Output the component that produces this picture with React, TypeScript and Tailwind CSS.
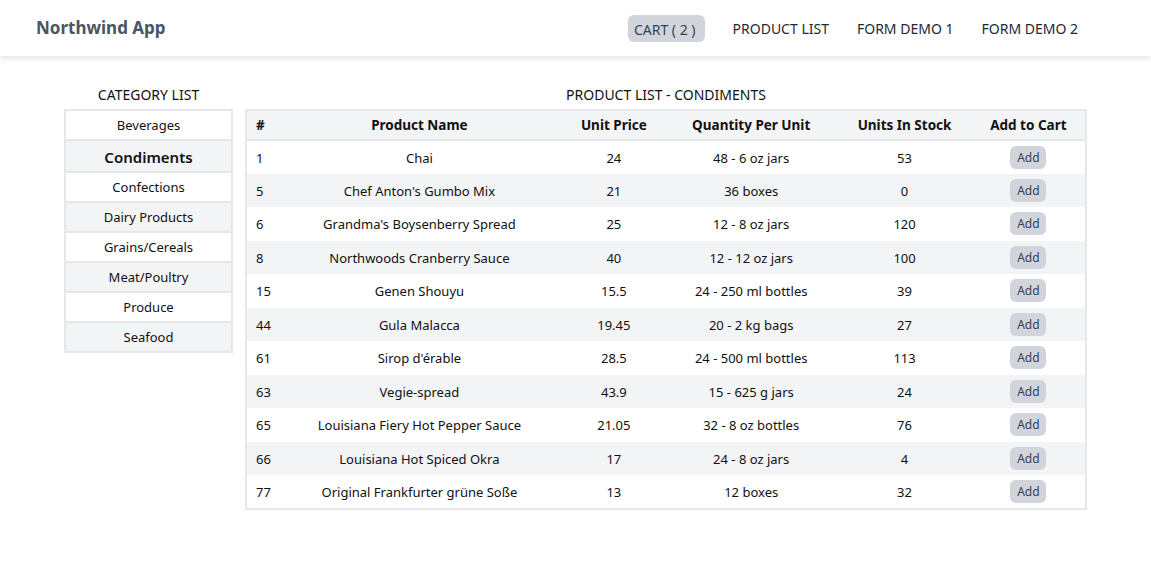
import React from "react";

const categories = [
  "Beverages",
  "Condiments",
  "Confections",
  "Dairy Products",
  "Grains/Cereals",
  "Meat/Poultry",
  "Produce",
  "Seafood",
];

const products: [string, string, string, string, string][] = [
  ["1", "Chai", "24", "48 - 6 oz jars", "53"],
  ["5", "Chef Anton's Gumbo Mix", "21", "36 boxes", "0"],
  ["6", "Grandma's Boysenberry Spread", "25", "12 - 8 oz jars", "120"],
  ["8", "Northwoods Cranberry Sauce", "40", "12 - 12 oz jars", "100"],
  ["15", "Genen Shouyu", "15.5", "24 - 250 ml bottles", "39"],
  ["44", "Gula Malacca", "19.45", "20 - 2 kg bags", "27"],
  ["61", "Sirop d'érable", "28.5", "24 - 500 ml bottles", "113"],
  ["63", "Vegie-spread", "43.9", "15 - 625 g jars", "24"],
  ["65", "Louisiana Fiery Hot Pepper Sauce", "21.05", "32 - 8 oz bottles", "76"],
  ["66", "Louisiana Hot Spiced Okra", "17", "24 - 8 oz jars", "4"],
  ["77", "Original Frankfurter grüne Soße", "13", "12 boxes", "32"],
];

export default function App() {
  return (
    <div
      className="min-h-[583px] bg-white text-[#111] text-[13px]"
      style={{ fontFamily: '"Noto Sans", sans-serif' }}
    >
      <header className="h-14 flex items-center justify-between pl-9 pr-[59px] shadow-[0_2px_6px_rgba(0,0,0,0.12)]">
        <div className="text-[17px] font-bold text-[#4b5563]">Northwind App</div>
        <nav className="flex items-center text-[14px] text-[#1f2937] pt-[1px]">
          <span className="bg-[#d1d5db] rounded-md pl-[6px] pr-[9px] h-[27px] flex items-center text-[#374151] mr-[14px] pt-[1px]">
            CART ( 2 )
          </span>
          <span className="px-[14px]">PRODUCT LIST</span>
          <span className="px-[14px]">FORM DEMO 1</span>
          <span className="px-[14px]">FORM DEMO 2</span>
        </nav>
      </header>

      <main className="flex gap-3 px-16 pt-[29px]">
        <div className="w-[169px] shrink-0">
          <div className="text-center text-[14px] h-5 leading-5 mb-[4px]">CATEGORY LIST</div>
          <div className="border-2 border-[#e5e7eb]">
            {categories.map((c, i) => (
              <div
                key={c}
                className={
                  "flex items-center justify-center pt-[2px] border-[#e5e7eb] " +
                  (i > 0 ? "border-t-2 " : "") +
                  (i % 2 === 1 ? "bg-[#f3f4f6] " : "bg-white ") +
                  (c === "Condiments"
                    ? "h-[32px] text-[15px] font-semibold"
                    : i === 0
                    ? "h-[28px]"
                    : "h-[30px]")
                }
              >
                {c}
              </div>
            ))}
          </div>
        </div>

        <div className="flex-1">
          <div className="text-center text-[14px] h-5 leading-5 mb-[4px]">PRODUCT LIST - CONDIMENTS</div>
          <table className="w-[842px] table-fixed border-2 border-[#e5e7eb] border-collapse">
            <colgroup>
              <col className="w-[30px]" />
              <col className="w-[286px]" />
              <col className="w-[102px]" />
              <col className="w-[172px]" />
              <col className="w-[134px]" />
              <col className="w-[114px]" />
            </colgroup>
            <thead>
              <tr className="bg-[#f3f4f6] h-[30px] border-b-2 border-[#e5e7eb] font-bold text-[13.5px]">
                <th className="text-left pl-[9px]">#</th>
                <th>Product Name</th>
                <th>Unit Price</th>
                <th>Quantity Per Unit</th>
                <th>Units In Stock</th>
                <th>Add to Cart</th>
              </tr>
            </thead>
            <tbody>
              {products.map((p, i) => (
                <tr
                  key={p[0]}
                  className={"h-[33.5px] " + (i % 2 === 1 ? "bg-[#f3f4f6]" : "bg-white")}
                >
                  <td className="text-left pl-[9px] pt-[2px] whitespace-nowrap">{p[0]}</td>
                  <td className="text-center pt-[2px] whitespace-nowrap">{p[1]}</td>
                  <td className="text-center pt-[2px]">{p[2]}</td>
                  <td className="text-center pt-[2px] whitespace-nowrap">{p[3]}</td>
                  <td className="text-center pt-[2px]">{p[4]}</td>
                  <td className="text-center">
                    <span className="inline-flex items-center justify-center align-middle bg-[#d1d5db] rounded-md w-9 h-[23px] text-[12px] text-[#374151] pt-[1px]">
                      Add
                    </span>
                  </td>
                </tr>
              ))}
            </tbody>
          </table>
        </div>
      </main>
    </div>
  );
}
